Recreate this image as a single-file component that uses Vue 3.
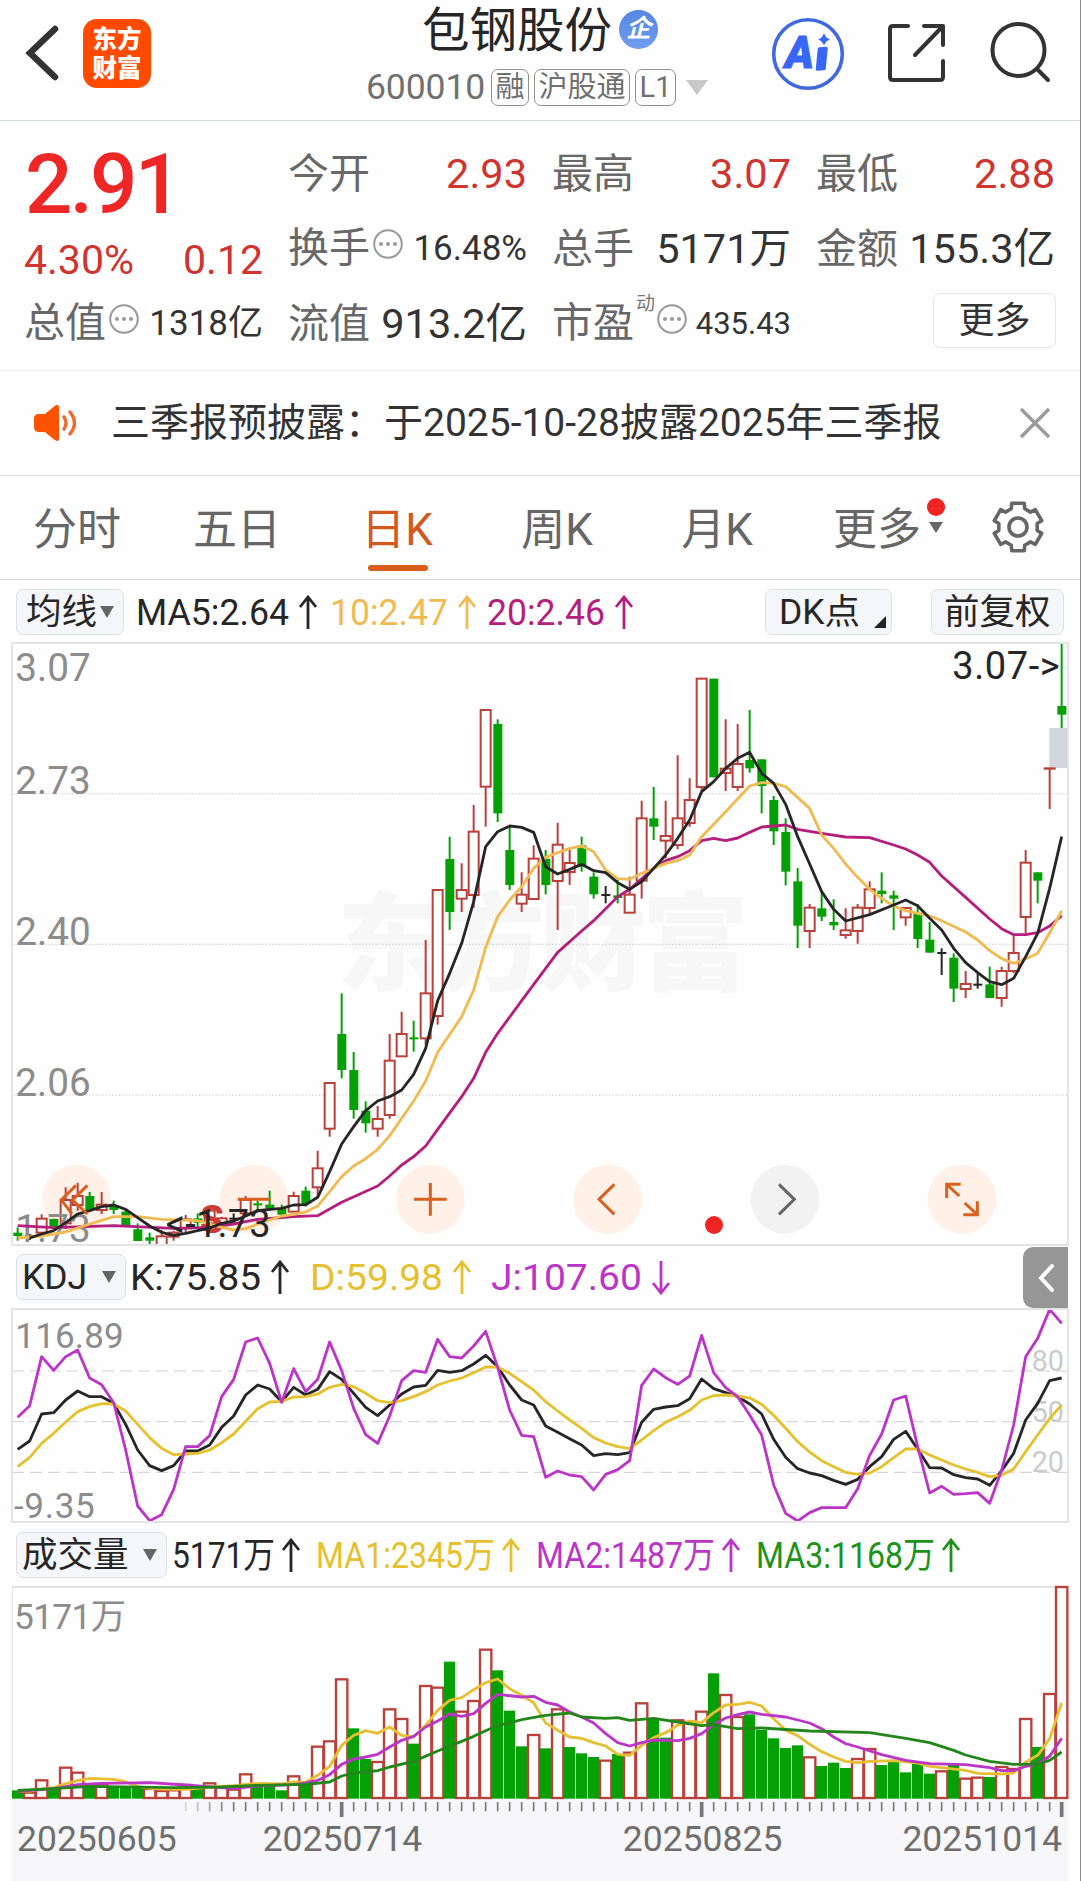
<template>
  <div class="page">
    <header class="header">
      <div class="header-left">
        <svg class="back" width="34" height="58" viewBox="0 0 34 58">
          <path d="M30 5L5 29L30 53" fill="none" stroke="#333" stroke-width="6.5" stroke-linecap="round" />
        </svg>
        <div class="logo"><span>东方</span><span>财富</span></div>
      </div>
      <div class="header-center">
        <div class="title">
          <span>包钢股份</span>
          <span class="badge">企</span>
        </div>
        <div class="subtitle">
          <span class="code">600010</span>
          <span class="tag w38">融</span>
          <span class="tag w96">沪股通</span>
          <span class="tag w41">L1</span>
          <i class="caret"></i>
        </div>
      </div>
      <div class="header-right">
        <svg width="74" height="76" viewBox="0 0 74 76">
          <circle cx="37" cy="38" r="34.3" fill="#fff" stroke="#4169df" stroke-width="3.6" />
          <text x="14" y="51.500" class="ai" textLength="29" lengthAdjust="spacingAndGlyphs">A</text>
          <path d="M48.500 33L55 32.500L53 52.500L46.500 53Z" fill="#3866f5" stroke="#3866f5" stroke-width="3.500" stroke-linejoin="round" />
          <path d="M53 17Q54.500 22 59 23.500Q54.500 25 53 29.500Q51.500 25 47 23.500Q51.500 22 53 17Z" fill="#3866f5" />
        </svg>
        <svg class="share" width="60" height="62" viewBox="0 0 60 62">
          <g fill="none" stroke="#333" stroke-width="4" stroke-linecap="round" stroke-linejoin="round">
            <path d="M22 4H7Q4 4 4 7V55Q4 58 7 58H54Q57 58 57 55V39" />
            <path d="M38 4H57V23M57 4L29 33" />
          </g>
        </svg>
        <svg class="search" width="64" height="64" viewBox="0 0 64 64">
          <g fill="none" stroke="#333" stroke-width="4" stroke-linecap="round">
            <ellipse cx="30.500" cy="30" rx="26" ry="26" />
            <path d="M49 49L60 60" />
          </g>
        </svg>
      </div>
    </header>

    <section class="quote">
      <div class="col col-price">
        <div class="price">2.91</div>
        <div class="change"><span>4.30%</span><span>0.12</span></div>
        <div class="cell"><label>总值</label><DotsIcon /><b class="v35">1318亿</b></div>
      </div>
      <div class="col">
        <div class="cell"><label>今开</label><b class="red">2.93</b></div>
        <div class="cell"><label>换手</label><DotsIcon /><b class="v35">16.48%</b></div>
        <div class="cell"><label>流值</label><b>913.2亿</b></div>
      </div>
      <div class="col">
        <div class="cell"><label>最高</label><b class="red">3.07</b></div>
        <div class="cell"><label>总手</label><b>5171万</b></div>
        <div class="cell"><label>市盈</label><sup>动</sup><DotsIcon /><b class="v31">435.43</b></div>
      </div>
      <div class="col">
        <div class="cell"><label>最低</label><b class="red">2.88</b></div>
        <div class="cell"><label>金额</label><b>155.3亿</b></div>
        <div class="cell cell-more"><button class="more">更多</button></div>
      </div>
    </section>

    <section class="notice">
      <svg width="48" height="40" viewBox="0 0 48 40">
        <path d="M2 16Q2 11 7 11H13L22 3.500Q27 0 27 5V35Q27 40 22 36.500L13 29H7Q2 29 2 24Z" fill="#ff5200" />
        <g fill="none" stroke="#ee6a2c" stroke-width="3.4" stroke-linecap="round">
          <path d="M32 14Q36 20 32 26" />
          <path d="M38 9Q47 20 38 31" />
        </g>
      </svg>
      <p>三季报预披露：于2025-10-28披露2025年三季报</p>
      <svg class="close" width="32" height="32" viewBox="0 0 32 32">
        <path d="M2 2L30 30M30 2L2 30" stroke="#9a9a9a" stroke-width="3.4" />
      </svg>
    </section>

    <nav class="tabs">
      <div v-for="t in tabs" :key="t" class="tab" :class="{ active: t === '日K' }">
        {{ t }}
        <template v-if="t === '更多'">
          <i class="tab-dot"></i>
          <i class="tab-caret"></i>
        </template>
      </div>
      <svg class="gear" width="56" height="56" viewBox="-28 -28 56 56">
        <g fill="none" stroke="#666" stroke-width="3.6" stroke-linejoin="round">
          <path :d="gearPath" />
          <circle r="9" />
        </g>
      </svg>
    </nav>

    <div class="legend legend-ma">
      <div class="select w108">均线<i></i></div>
      <LegendItem v-for="m in maLegend" :key="m.text" v-bind="m" />
      <div class="select dk">DK点<em></em></div>
      <div class="select fq">前复权</div>
    </div>

    <!-- K 线：横向每根 36 单位，3 单位 = 1px -->
    <svg class="chart" width="1056" height="602" viewBox="36 9 3168 1806">
      <text x="1010" y="1026" class="watermark" textLength="1235">东方财富</text>
      <g stroke="#c9c9c9" stroke-width="2.500" stroke-dasharray="5 5">
        <path v-for="y in [461, 913, 1365]" :key="y" :d="`M36 ${y}H3204`" />
      </g>
      <circle v-for="b in controls" :key="b.x" :cx="b.x" cy="1678" r="103" :fill="b.gray ? '#f2f2f2' : '#fff1e8'" />
      <!-- 跳空缺口 -->
      <rect x="3148" y="264" width="54" height="120" fill="#d3d6dc" />
      <g v-for="(c, i) in candles" :key="i" :stroke="colors[c[0]]" stroke-width="6">
        <template v-if="c[0] === 'r'">
          <path :d="`M${px(i)} ${c[1]}V${c[2]}M${px(i)} ${c[3]}V${c[4]}`" />
          <rect :x="px(i) - 15" :y="c[2]" width="30" :height="Math.max(c[3] - c[2], 1)" fill="#fff" />
        </template>
        <template v-else>
          <path :d="`M${px(i)} ${c[1]}V${c[4]}`" />
          <rect :x="px(i) - 13" :y="c[2]" width="27" :height="Math.max(c[3] - c[2], 6)" :fill="colors[c[0]]" stroke="none" />
        </template>
      </g>
      <g class="labels">
        <text x="46" y="124">3.07</text>
        <text x="46" y="463">2.73</text>
        <text x="46" y="915">2.40</text>
        <text x="46" y="1367">2.06</text>
        <text x="46" y="1806">1.73</text>
      </g>
      <text x="600" y="1780" class="sell">S</text>
      <g class="line">
        <polyline :points="sparse(ma20)" stroke="#b41e7d" />
        <polyline :points="sparse(ma10)" stroke="#efbb52" />
        <polyline :points="sparse(ma5)" stroke="#262626" />
      </g>
      <text x="497" y="1790" class="mark" textLength="315">&lt;-1.73</text>
      <text x="2857" y="117" class="mark" textLength="322">3.07-&gt;</text>
      <g v-for="b in controls" :key="'i' + b.x" :transform="`translate(${b.x} 1678)`">
        <path :d="b.icon" fill="none" :stroke="b.gray ? '#666' : '#d9601f'" stroke-width="9" />
      </g>
      <circle cx="2142" cy="1755" r="27" fill="#f02523" />
    </svg>

    <div class="legend legend-kdj">
      <div class="select w110">KDJ<i></i></div>
      <LegendItem v-for="m in kdjLegend" :key="m.text" v-bind="m" />
      <div class="drawer">
        <svg width="20" height="32" viewBox="0 0 20 32">
          <path d="M16 4L5 16L16 28" fill="none" stroke="#fff" stroke-width="4" stroke-linecap="round" />
        </svg>
      </div>
    </div>

    <svg class="chart" width="1056" height="213" viewBox="36 57 3168 639">
      <g stroke="#cfcfcf" stroke-width="3" stroke-dasharray="36 18">
        <path v-for="y in [243, 395, 547]" :key="y" :d="`M36 ${y}H3204`" />
      </g>
      <g class="labels kdj-labels">
        <text x="46" y="174" textLength="325">116.89</text>
        <text x="42" y="683" textLength="242">-9.35</text>
      </g>
      <g class="levels">
        <text x="3095" y="242">80</text>
        <text x="3095" y="395">50</text>
        <text x="3095" y="546">20</text>
      </g>
      <g class="line">
        <polyline :points="dense(kLine)" stroke="#262626" />
        <polyline :points="dense(dLine)" stroke="#e5c12f" />
        <polyline :points="dense(jLine)" stroke="#bb35c6" />
      </g>
    </svg>

    <div class="legend legend-vol">
      <div class="select w150">成交量<i></i></div>
      <LegendItem v-for="m in volLegend" :key="m.text" v-bind="m" />
    </div>

    <svg class="chart chart-vol" width="1056" height="213" viewBox="36 17 3168 639">
      <g v-for="(v, i) in volumes" :key="i">
        <rect v-if="v > 0" :x="px(i) - 17" :y="v" width="34" :height="653 - v" fill="#fff" stroke="#b9403b" stroke-width="7" />
        <rect v-else :x="px(i) - 17" :y="-v" width="33.500" :height="655 + v" fill="#05a005" />
      </g>
      <text x="42" y="146" class="vol-max" textLength="336">5171万</text>
      <g class="line">
        <polyline :points="sparse(volMa1)" stroke="#e7bf33" />
        <polyline :points="sparse(volMa2)" stroke="#bb35c6" />
        <polyline :points="sparse(volMa3)" stroke="#23861b" />
      </g>
    </svg>

    <footer class="axis">
      <svg width="1056" height="18" viewBox="36 0 3168 54">
        <path v-for="t in ticks" :key="t.i" :d="`M${px(t.i)} 0V${t.major ? 45 : 28}`" stroke="#777" :stroke-width="t.major ? 11 : 5" :opacity="t.opacity" />
      </svg>
      <div class="dates">
        <span>20250605</span>
        <span>20250714</span>
        <span>20250825</span>
        <span>20251014</span>
      </div>
    </footer>
  </div>
</template>

<script setup>
import { h } from 'vue'

const tabs = ['分时', '五日', '日K', '周K', '月K', '更多']
const colors = { r: '#b9403b', g: '#05a005', k: '#262626' }

// 圆圈省略号小图标
const DotsIcon = () =>
  h('svg', { class: 'dots', width: 32, height: 32, viewBox: '0 0 32 32' }, [
    h('circle', { cx: 16, cy: 16, r: 13.8, fill: 'none', stroke: '#999', 'stroke-width': 2 }),
    ...[9, 16, 23].map((x) => h('circle', { cx: x, cy: 16, r: 2, fill: '#999' }))
  ])

// 指标文字 + 箭头，w 为文字宽度，gap 为左侧间距
const LegendItem = (p) =>
  h('svg', { width: p.w + 32, height: 46, viewBox: `0 0 ${p.w + 32} 46`, style: { marginLeft: `${p.gap}px` } }, [
    h('text', { x: 0, y: 35.5, fill: p.color, 'font-size': 36, textLength: p.w, lengthAdjust: 'spacingAndGlyphs' }, p.text),
    h('path', {
      d: p.down ? 'M-8 21L0 31L8 21M0 31V-1' : 'M-8 10L0 0L8 10M0 0V32',
      transform: `translate(${p.w + (p.off || 19)} 8)`,
      fill: 'none',
      stroke: p.color,
      'stroke-width': 2.8
    })
  ])
LegendItem.props = ['text', 'w', 'gap', 'color', 'down', 'off']

const maLegend = [
  { text: 'MA5:2.64', w: 153, gap: 12, color: '#262626' },
  { text: '10:2.47', w: 118, gap: 9, color: '#efbb52' },
  { text: '20:2.46', w: 118, gap: 7, color: '#b41e7d' }
]
const kdjLegend = [
  { text: 'K:75.85', w: 131, gap: 4, color: '#262626' },
  { text: 'D:59.98', w: 133, gap: 17, color: '#e5c12f' },
  { text: 'J:107.60', w: 151, gap: 16, color: '#bb35c6', down: true }
]
const volLegend = [
  { text: '5171万', w: 103, gap: 5, color: '#262626', off: 16 },
  { text: 'MA1:2345万', w: 179, gap: 9, color: '#e5c12f', off: 16 },
  { text: 'MA2:1487万', w: 179, gap: 9, color: '#bb35c6', off: 16 },
  { text: 'MA3:1168万', w: 179, gap: 9, color: '#1f921a', off: 16 }
]

const controls = [
  { x: 230, icon: 'M-2 -42L-46 2L-14 44M32 -42L-12 2L32 44' },
  { x: 762, icon: 'M-49 0H49' },
  { x: 1291, icon: 'M-49 0H49M0 -49V49' },
  { x: 1823, icon: 'M20 -45L-26 0L20 45' },
  { x: 2355, gray: true, icon: 'M-18 -45L28 0L-18 45' },
  { x: 2886, icon: 'M-46 -4V-45H-4M-46 -45L-8 -10M46 6V46H4M46 46L8 11' }
]

const gearPath = (() => {
  const pts = []
  for (let i = 0; i < 6; i++) {
    const base = i * 60 - 90
    for (const [r, a] of [[19.5, -20], [24.5, -15], [24.5, 15], [19.5, 20]]) {
      const rad = ((base + a) * Math.PI) / 180
      pts.push(`${(r * Math.cos(rad)).toFixed(1)} ${(r * Math.sin(rad)).toFixed(1)}`)
    }
  }
  return `M${pts.join('L')}Z`
})()

// 每根：颜色, 最高, 实体上沿, 实体下沿, 最低
const candles = [
  ['g', 1762, 1778, 1788, 1802], ['k', 1782, 1785, 1790, 1800], ['r', 1723, 1736, 1778, 1785], ['g', 1736, 1737, 1765, 1765],
  ['r', 1642, 1680, 1750, 1768], ['r', 1628, 1668, 1695, 1712], ['g', 1656, 1668, 1712, 1715], ['r', 1656, 1694, 1710, 1722],
  ['g', 1682, 1696, 1710, 1722], ['g', 1708, 1715, 1756, 1756], ['g', 1750, 1768, 1803, 1803], ['g', 1778, 1792, 1802, 1815],
  ['r', 1770, 1789, 1815, 1815], ['r', 1772, 1778, 1790, 1802], ['r', 1725, 1738, 1765, 1778], ['g', 1720, 1735, 1748, 1760],
  ['r', 1700, 1712, 1750, 1760], ['r', 1730, 1735, 1750, 1752], ['k', 1720, 1733, 1737, 1750], ['r', 1668, 1680, 1720, 1725],
  ['g', 1682, 1690, 1696, 1712], ['g', 1652, 1694, 1706, 1712], ['g', 1694, 1706, 1724, 1724], ['r', 1655, 1668, 1715, 1715],
  ['g', 1640, 1652, 1692, 1700], ['r', 1532, 1585, 1642, 1670], ['r', 1329, 1329, 1466, 1490], ['g', 1060, 1182, 1290, 1315],
  ['g', 1236, 1290, 1410, 1436], ['g', 1384, 1412, 1450, 1478], ['r', 1398, 1437, 1466, 1490], ['r', 1182, 1262, 1425, 1436],
  ['r', 1115, 1182, 1249, 1250], ['g', 1142, 1192, 1197, 1235], ['r', 900, 1060, 1195, 1215], ['r', 750, 750, 1128, 1154],
  ['g', 590, 657, 816, 870], ['r', 670, 750, 776, 816], ['r', 495, 575, 765, 803], ['r', 210, 210, 440, 560],
  ['g', 238, 252, 520, 546], ['g', 560, 630, 735, 750], ['r', 697, 764, 791, 816], ['r', 616, 656, 777, 777],
  ['g', 630, 656, 735, 763], ['r', 548, 614, 723, 870], ['r', 630, 669, 696, 735], ['g', 590, 616, 680, 695],
  ['g', 697, 710, 763, 776], ['k', 738, 762, 767, 790], ['g', 720, 766, 774, 790], ['r', 710, 764, 818, 818],
  ['r', 482, 535, 722, 776], ['g', 441, 535, 560, 600], ['r', 482, 588, 602, 655], ['r', 346, 535, 615, 628],
  ['r', 415, 480, 549, 560], ['r', 116, 116, 441, 455], ['g', 116, 116, 412, 412], ['r', 238, 386, 399, 453],
  ['r', 252, 372, 441, 453], ['g', 210, 360, 385, 398], ['g', 358, 358, 438, 520], ['g', 468, 480, 574, 615],
  ['g', 535, 576, 695, 736], ['g', 684, 724, 857, 924], ['r', 792, 803, 873, 924], ['g', 757, 805, 830, 843],
  ['g', 778, 846, 856, 870], ['r', 805, 871, 885, 896], ['r', 792, 803, 873, 911], ['r', 724, 748, 804, 825],
  ['g', 697, 752, 762, 790], ['g', 752, 766, 776, 870], ['r', 803, 804, 832, 857], ['g', 792, 820, 897, 924],
  ['g', 846, 899, 938, 938], ['k', 925, 936, 941, 1005], ['g', 940, 953, 1046, 1086], ['r', 993, 1032, 1047, 1074],
  ['k', 1000, 1031, 1036, 1046], ['g', 980, 1033, 1074, 1074], ['r', 980, 993, 1074, 1100], ['r', 885, 939, 993, 1000],
  ['r', 630, 668, 831, 880], ['g', 697, 697, 722, 790], ['r', 385, 385, 385, 507], ['g', 10, 198, 224, 264]
]

// 折线拐点：[序号, 纵坐标]
const ma5 = [
  [1, 1794], [2, 1782], [3, 1772], [4, 1748], [5, 1722], [6, 1712], [7, 1700], [8, 1695], [9, 1708], [10, 1733], [11, 1758], [12, 1777],
  [13, 1786], [14, 1780], [15, 1772], [16, 1764], [17, 1750], [18, 1743], [19, 1728], [20, 1712], [21, 1708], [22, 1705], [23, 1695], [24, 1694],
  [25, 1672], [26, 1595], [27, 1512], [28, 1460], [29, 1412], [30, 1383], [31, 1370], [32, 1350], [33, 1303], [34, 1225], [35, 1082], [36, 1000],
  [37, 910], [38, 785], [39, 620], [40, 575], [41, 558], [42, 562], [43, 577], [44, 680], [45, 702], [46, 688], [47, 673], [48, 692],
  [49, 698], [50, 728], [51, 748], [52, 725], [53, 685], [54, 645], [55, 595], [56, 540], [57, 455], [58, 425], [59, 385], [60, 355],
  [61, 337], [62, 400], [63, 430], [64, 493], [65, 590], [66, 672], [67, 755], [68, 808], [69, 843], [71, 824], [73, 795], [74, 780],
  [75, 797], [76, 835], [77, 870], [78, 925], [79, 968], [80, 998], [81, 1025], [82, 1034], [83, 1015], [84, 950], [85, 880], [86, 745], [87, 590]
]
const ma10 = [
  [0, 1794], [2, 1788], [4, 1776], [6, 1752], [8, 1730], [10, 1730], [12, 1738], [15, 1742], [17, 1762], [18, 1770], [19, 1766], [20, 1752],
  [22, 1728], [23, 1723], [24, 1716], [25, 1698], [26, 1655], [27, 1610], [28, 1578], [29, 1556], [30, 1528], [31, 1487], [33, 1383], [34, 1323],
  [35, 1237], [37, 1130], [38, 1050], [39, 922], [40, 830], [41, 780], [42, 740], [43, 685], [44, 652], [45, 638], [46, 625], [47, 618],
  [48, 635], [49, 690], [50, 716], [51, 718], [52, 700], [53, 685], [54, 670], [55, 662], [56, 645], [57, 590], [59, 515], [61, 438],
  [62, 428], [63, 430], [64, 440], [66, 505], [67, 585], [68, 625], [69, 672], [70, 712], [71, 748], [72, 775], [73, 798], [74, 812],
  [76, 828], [77, 842], [79, 876], [80, 900], [81, 932], [82, 956], [83, 970], [84, 957], [85, 940], [86, 878], [87, 813]
]
const ma20 = [
  [0, 1757], [3, 1763], [8, 1757], [13, 1765], [16, 1762], [18, 1752], [20, 1738], [23, 1730], [25, 1727], [27, 1687], [30, 1638], [31, 1608],
  [32, 1575], [33, 1550], [34, 1518], [35, 1468], [37, 1370], [38, 1315], [39, 1237], [40, 1180], [42, 1082], [44, 985], [45, 937], [47, 873],
  [48, 842], [50, 770], [51, 748], [53, 685], [54, 662], [55, 650], [56, 632], [57, 602], [58, 595], [59, 602], [60, 594], [61, 577],
  [62, 561], [64, 555], [65, 568], [67, 580], [69, 591], [71, 593], [73, 615], [74, 627], [75, 645], [76, 667], [77, 708], [79, 772],
  [81, 837], [82, 866], [83, 884], [84, 884], [85, 878], [86, 858], [87, 827]
]

const kLine = [
  478, 453, 372, 368, 330, 303, 320, 320, 340, 403, 480, 527, 542, 527, 483, 483, 465, 412, 378, 315, 285, 297,
  335, 292, 315, 298, 245, 268, 310, 352, 377, 345, 312, 291, 286, 241, 247, 242, 222, 196, 230, 285, 330, 345,
  408, 427, 446, 465, 497, 491, 494, 488, 397, 358, 351, 347, 326, 267, 296, 308, 320, 342, 372, 448, 502, 536,
  549, 557, 571, 583, 568, 530, 500, 448, 424, 478, 533, 534, 554, 563, 567, 586, 542, 490, 390, 340, 272, 264
]
const dLine = [
  530, 502, 460, 430, 396, 365, 350, 341, 342, 363, 403, 443, 475, 494, 492, 490, 480, 458, 432, 394, 356, 336,
  334, 321, 320, 312, 292, 283, 290, 310, 332, 338, 332, 320, 305, 285, 273, 264, 248, 231, 231, 250, 275, 300,
  335, 363, 390, 415, 443, 459, 470, 476, 450, 422, 397, 380, 361, 330, 317, 315, 318, 324, 343, 376, 415, 455,
  486, 512, 530, 547, 553, 549, 530, 503, 477, 477, 495, 510, 525, 537, 547, 560, 556, 537, 485, 435, 385, 345
]
const jLine = [
  382, 347, 200, 241, 200, 180, 264, 284, 338, 480, 648, 692, 674, 598, 470, 470, 437, 320, 268, 156, 144, 220,
  337, 236, 305, 268, 156, 242, 355, 434, 460, 378, 272, 242, 247, 148, 200, 204, 168, 124, 232, 360, 436, 440,
  562, 543, 555, 560, 600, 553, 539, 512, 286, 237, 263, 283, 258, 136, 248, 293, 320, 375, 435, 585, 670, 693,
  668, 653, 653, 653, 596, 496, 432, 330, 318, 470, 609, 589, 613, 611, 608, 640, 540, 405, 200, 145, 58, 100
]

// 成交量柱顶位置，负数为绿柱
const volumes = [
  -630, 637, 600, -625, 562, 577, -612, 612, -618, -620, -620, 626, 632, 630, 614, -616, 609, 622, 628, 582, -612, -612,
  -630, 588, -610, 499, 483, 297, -444, -536, 545, 387, 416, -490, 317, 322, -244, 394, 362, 208, -270, -391, -498, 464,
  -504, 387, -500, -519, -530, 541, -521, 517, 369, -414, -472, 420, 425, 394, -279, 344, 410, -402, -449, -474, -503, -495,
  531, -557, -547, -563, 536, 506, -554, -544, -576, -545, -580, 573, -553, 595, 592, -590, 560, 566, 416, -500, 341, 20
]
const volMa1 = [
  [0, 632], [1, 632], [2, 626], [3, 622], [4, 610], [5, 601], [6, 594], [8, 597], [9, 605], [10, 618], [11, 624], [12, 626],
  [14, 627], [16, 620], [18, 616], [20, 609], [22, 611], [23, 605], [24, 606], [25, 585], [26, 558], [27, 495], [28, 465], [29, 451],
  [30, 459], [31, 440], [32, 465], [33, 470], [34, 435], [35, 390], [36, 360], [37, 352], [38, 328], [39, 307], [40, 296], [41, 325],
  [42, 345], [43, 367], [44, 428], [45, 450], [46, 470], [47, 474], [48, 487], [49, 497], [50, 522], [51, 525], [52, 495], [53, 472],
  [54, 457], [55, 435], [56, 422], [57, 427], [58, 397], [59, 374], [60, 372], [61, 366], [62, 377], [63, 415], [64, 450], [65, 466],
  [66, 492], [67, 514], [68, 530], [69, 543], [70, 547], [71, 543], [73, 541], [75, 548], [76, 558], [77, 562], [79, 570], [80, 579],
  [82, 581], [83, 578], [84, 545], [85, 525], [86, 475], [87, 368]
]
const volMa2 = [
  [0, 633], [3, 625], [5, 613], [7, 609], [11, 607], [14, 614], [18, 625], [20, 617], [23, 613], [24, 608], [25, 600], [26, 583],
  [27, 552], [28, 536], [29, 530], [30, 522], [31, 500], [32, 480], [33, 468], [34, 440], [35, 422], [36, 401], [37, 408], [38, 400],
  [39, 369], [40, 342], [42, 350], [43, 348], [44, 366], [45, 374], [46, 395], [47, 410], [48, 428], [49, 460], [50, 487], [51, 497],
  [52, 487], [53, 479], [55, 481], [56, 474], [57, 460], [58, 433], [59, 413], [60, 403], [61, 395], [62, 402], [64, 410], [66, 428],
  [67, 445], [68, 470], [69, 490], [70, 500], [72, 523], [74, 540], [76, 550], [79, 553], [81, 562], [82, 571], [83, 571], [84, 558],
  [85, 550], [86, 528], [87, 474]
]
const volMa3 = [
  [0, 630], [3, 625], [6, 618], [13, 622], [17, 620], [20, 615], [24, 612], [26, 605], [27, 587], [28, 578], [29, 575], [30, 571],
  [31, 560], [33, 543], [35, 512], [37, 483], [38, 468], [40, 435], [41, 428], [42, 418], [44, 405], [46, 398], [47, 410], [49, 414],
  [50, 412], [51, 420], [53, 414], [55, 425], [57, 436], [58, 433], [60, 445], [62, 443], [66, 452], [71, 457], [74, 474], [76, 487],
  [78, 510], [79, 524], [81, 543], [83, 552], [85, 551], [86, 540], [87, 515]
]

const ticks = Array.from({ length: 74 }, (_, n) => ({
  i: n + 14,
  major: [27, 57, 87].includes(n + 14),
  opacity: Math.min(1, 0.25 + n * 0.2)
}))

const px = (i) => 53 + i * 36
const dense = (list) => list.map((y, i) => `${px(i)},${y}`).join(' ')
const sparse = (list) => list.map(([i, y]) => `${px(i)},${y}`).join(' ')
</script>

<style>
body {
  margin: 0;
  background: #fefefe;
}
</style>

<style scoped>
.page {
  width: 1081px;
  height: 1881px;
  box-sizing: border-box;
  border-right: 1px solid #8a8a8a;
  background: #fefefe;
  overflow: hidden;
  font-family: Roboto, 'Noto Sans CJK SC', sans-serif;
  color: #333;
}
svg {
  display: block;
  flex: none;
}
svg text {
  white-space: pre;
}

/* 顶栏 */
.header {
  display: flex;
  justify-content: space-between;
  height: 120px;
  border-bottom: 1px solid #d3dadc;
}
.header-left {
  display: flex;
  width: 330px;
  padding: 19px 0 0 25px;
  box-sizing: border-box;
}
.back {
  margin-top: 5px;
}
.logo {
  display: flex;
  flex-direction: column;
  align-items: center;
  justify-content: center;
  width: 68px;
  height: 69px;
  margin-left: 24px;
  border-radius: 14px;
  background: #ff4a00;
  color: #fff;
  font-size: 24.5px;
  font-weight: 900;
  line-height: 29px;
}
.header-center {
  width: 380px;
}
.title {
  display: flex;
  height: 62px;
  padding-left: 72px;
  font-size: 47.500px;
  line-height: 62px;
  color: #262626;
}
.badge {
  width: 39px;
  height: 39px;
  margin: 10px 0 0 7px;
  border-radius: 50%;
  background: linear-gradient(#5686e0, #6f9df0);
  color: #fff;
  font-size: 25px;
  font-weight: 700;
  font-style: italic;
  line-height: 38px;
  text-align: center;
}
.subtitle {
  display: flex;
  align-items: center;
  height: 50px;
  padding-left: 16px;
}
.code {
  width: 125px;
  font-size: 35.500px;
  letter-spacing: -0.1px;
  line-height: 50px;
  color: #707070;
}
.tag {
  height: 37px;
  margin-right: 5px;
  box-sizing: border-box;
  border: 1.500px solid #909090;
  border-radius: 7px;
  font-size: 29px;
  line-height: 35px;
  text-align: center;
  color: #707070;
}
.w38 { width: 38px; }
.w96 { width: 96px; }
.w41 { width: 41px; }
.caret {
  margin-left: 5px;
  border: 11px solid transparent;
  border-top: 15px solid #c8c8c8;
  border-bottom: 0;
}
.header-right {
  display: flex;
  width: 330px;
  padding-top: 16px;
}
.header-right svg:first-child {
  margin-left: 21px;
}
.ai {
  font-size: 45px;
  font-weight: 900;
  font-style: italic;
  fill: #3866f5;
  stroke: #3866f5;
  stroke-width: 1;
}
.share {
  margin: 6px 0 0 41px;
}
.search {
  margin: 4px 0 0 42px;
}

/* 行情 */
.quote {
  display: flex;
  gap: 26px;
  height: 249px;
  padding-left: 25px;
  border-bottom: 1px solid #efefef;
}
.col {
  display: flex;
  flex-direction: column;
  width: 238px;
  padding-top: 15px;
  box-sizing: border-box;
}
.cell {
  display: flex;
  align-items: baseline;
  height: 75px;
  line-height: 75px;
  white-space: nowrap;
}
.cell label {
  margin-left: -1px;
  font-size: 41px;
  color: #686868;
}
.cell b {
  margin-left: auto;
  font-size: 41.500px;
  font-weight: 400;
}
.cell .v35 {
  align-self: flex-start;
  font-size: 35px;
}
.cell .v31 {
  align-self: flex-start;
  font-size: 31px;
}
.cell sup {
  align-self: flex-start;
  height: 30px;
  margin-left: 2px;
  font-size: 19px;
  line-height: 36px;
  color: #777;
}
.dots {
  align-self: flex-start;
  margin: 17px 0 0 2px;
}
.cell sup + .dots { margin-left: 1px; }
.cell .red,
.change {
  color: #cf3430;
}
.price {
  height: 90px;
  font-size: 83.500px;
  font-weight: 500;
  line-height: 97px;
  color: #ee2726;
  letter-spacing: -2.800px;
}
.change {
  display: flex;
  justify-content: space-between;
  height: 60px;
  margin-left: -1px;
  font-size: 41px;
  line-height: 68px;
}
.cell-more {
  justify-content: flex-end;
}
.more {
  width: 123px;
  height: 55px;
  margin: 7px -1px 0 0;
  padding: 0;
  align-self: flex-start;
  border: 1.500px solid #e6e6e6;
  border-radius: 7px;
  background: #fff;
  font: 36px/50px Roboto, 'Noto Sans CJK SC', sans-serif;
  color: #333;
}

/* 公告 */
.notice {
  display: flex;
  align-items: center;
  height: 104px;
  padding-left: 32px;
  border-bottom: 1px solid #dcdcdc;
}
.notice p {
  width: 908px;
  margin: 0 0 0 31px;
  font-size: 39px;
  line-height: 60px;
  white-space: nowrap;
}

/* 周期 */
.tabs {
  display: flex;
  height: 103px;
  margin-left: -3px;
  border-bottom: 1px solid #d8d8d8;
}
.tab {
  position: relative;
  width: 160px;
  flex: none;
  font-size: 44px;
  line-height: 108px;
  text-align: center;
  color: #666;
}
.tab.active {
  color: #d35a1c;
}
.tab.active::after {
  content: '';
  position: absolute;
  left: 51px;
  top: 89px;
  width: 60px;
  height: 6px;
  border-radius: 3px;
  background: #d95e19;
}
.tab-dot {
  position: absolute;
  left: 130px;
  top: 22px;
  width: 18px;
  height: 18px;
  border-radius: 50%;
  background: #f02523;
}
.tab-caret {
  position: absolute;
  left: 132px;
  top: 46px;
  border: 7.500px solid transparent;
  border-top: 11px solid #666;
  border-bottom: 0;
}
.gear {
  margin: 23px 0 0 33px;
}

/* 指标栏 */
.legend {
  display: flex;
  padding-left: 16px;
}
.legend-ma {
  height: 54px;
  padding-top: 9px;
}
.legend-kdj {
  height: 55px;
  padding-top: 9px;
}
.legend-vol {
  height: 54px;
  padding-top: 10px;
}
.select {
  display: flex;
  align-items: center;
  height: 46px;
  padding-left: 9px;
  box-sizing: border-box;
  flex: none;
  border: 1.500px solid #dde1e5;
  border-radius: 7px;
  background: #f5f6f9;
  font-size: 35.500px;
  line-height: 42px;
  color: #262626;
  white-space: nowrap;
}
.select i {
  margin: 0 9px 0 auto;
  border: 7.500px solid transparent;
  border-top: 12px solid #666;
  border-bottom: 0;
}
.w108 { width: 108px; }
.w110 { width: 110px; padding-left: 5px; }
.w150 { width: 151px; padding-left: 5px; }
.dk {
  width: 127px;
  margin-left: auto;
  padding-left: 13px;
}
.dk em {
  align-self: flex-end;
  margin: 0 5px 6px auto;
  border-left: 12px solid transparent;
  border-bottom: 12px solid #222;
}
.fq {
  width: 133px;
  margin: 0 16px 0 39px;
  padding-left: 12px;
}
.drawer {
  display: flex;
  align-items: center;
  justify-content: center;
  width: 45px;
  height: 61px;
  margin: -7px 12px 0 auto;
  border-radius: 10px 0 0 10px;
  background: #969696;
}

/* 图表 */
.chart {
  margin-left: 12px;
  outline: 2px solid #e4e4e4;
  outline-offset: -1px;
  overflow: visible;
}
.chart-vol {
  outline: 0;
  box-shadow: inset 1px 2px 0 #e4e4e4, inset -1px 0 0 #e4e4e4;
}
.line {
  fill: none;
  stroke-width: 8.500;
  stroke-linejoin: round;
}
.labels {
  font-size: 116px;
  fill: #8c8c8c;
}
.kdj-labels {
  font-size: 105px;
}
.levels {
  font-size: 86px;
  fill: #cbcbcb;
}
.mark {
  font-size: 114px;
  fill: #262626;
}
.sell {
  font-size: 116px;
  font-weight: 700;
  fill: #cc3a35;
}
.vol-max {
  font-size: 106px;
  fill: #8c8c8c;
}
.watermark {
  font-size: 320px;
  font-weight: 900;
  fill: #f7f7f7;
}
.axis {
  width: 1056px;
  height: 80px;
  margin-left: 12px;
  padding-top: 3px;
  background: #f7f7fa;
}
.dates {
  display: flex;
  padding: 0 6px 0 5px;
  font-size: 35.500px;
  line-height: 38px;
  color: #6e6e6e;
}
.dates span:nth-child(2) { margin-left: 86px; }
.dates span:nth-child(3) { margin-left: auto; }
.dates span:nth-child(4) { margin-left: 120px; }
</style>
